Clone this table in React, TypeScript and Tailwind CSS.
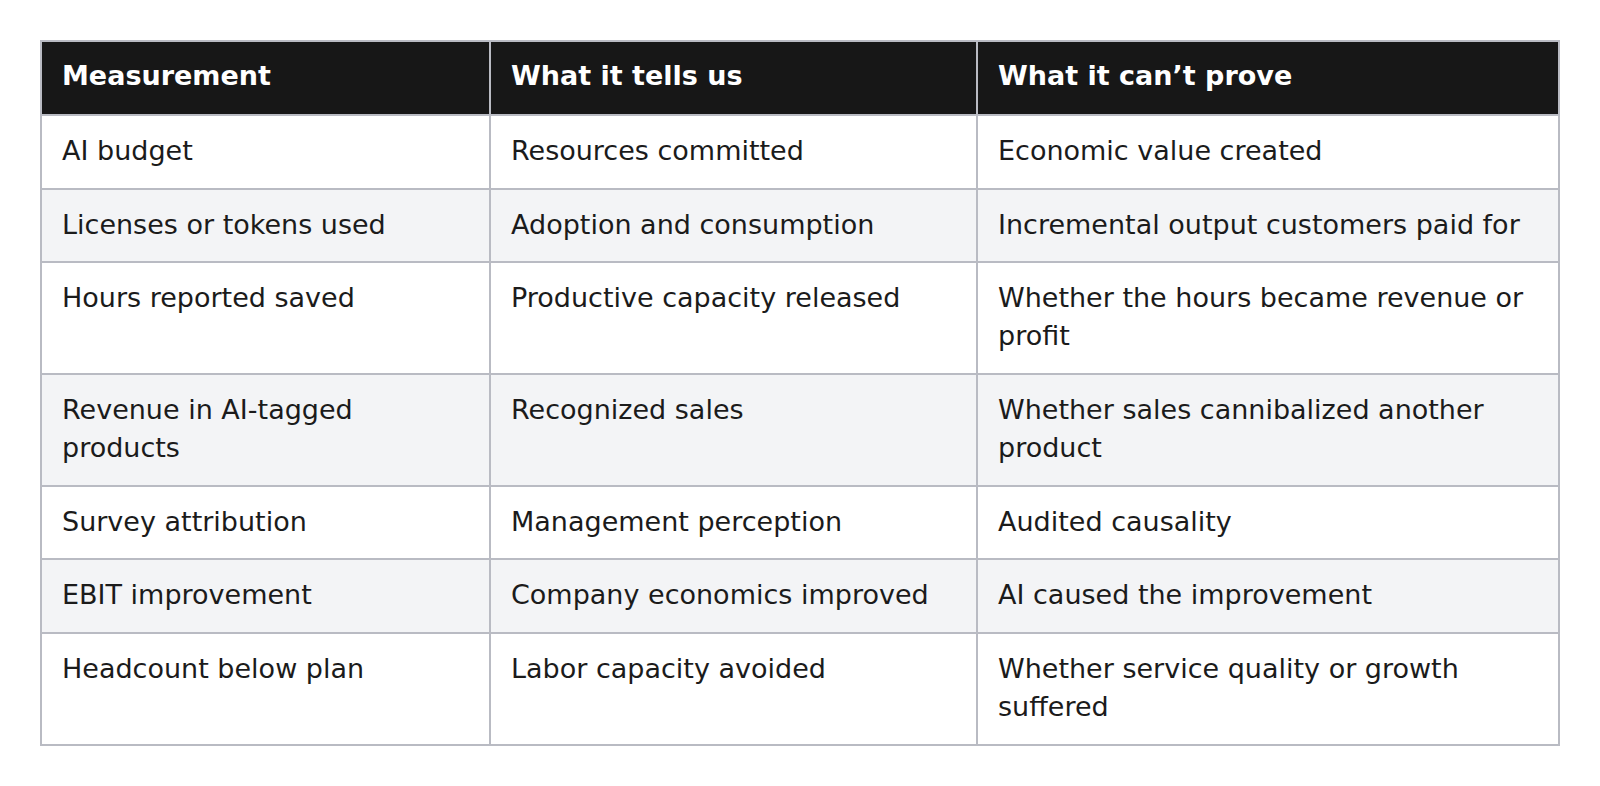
const rows: [string, string, string][] = [
  ["AI budget", "Resources committed", "Economic value created"],
  ["Licenses or tokens used", "Adoption and consumption", "Incremental output customers paid for"],
  ["Hours reported saved", "Productive capacity released", "Whether the hours became revenue or profit"],
  ["Revenue in AI-tagged products", "Recognized sales", "Whether sales cannibalized another product"],
  ["Survey attribution", "Management perception", "Audited causality"],
  ["EBIT improvement", "Company economics improved", "AI caused the improvement"],
  ["Headcount below plan", "Labor capacity avoided", "Whether service quality or growth suffered"],
];

const cell = "border-2 border-[#b9bbc3] px-[20px] align-top text-left";

export default function App() {
  return (
    <div className="min-h-[786px] bg-white p-[40px] font-['DejaVu_Sans',sans-serif] text-[27px] leading-[1.4] text-[#1b1b1b]">
      <table className="w-full table-fixed border-collapse">
        <colgroup>
          <col className="w-[449px]" />
          <col className="w-[487px]" />
          <col />
        </colgroup>
        <thead>
          <tr className="bg-[#171717] text-white">
            <th className={`${cell} pt-[15px] pb-[19px] font-bold`}>Measurement</th>
            <th className={`${cell} pt-[15px] pb-[19px] font-bold`}>What it tells us</th>
            <th className={`${cell} pt-[15px] pb-[19px] font-bold`}>What it can’t prove</th>
          </tr>
        </thead>
        <tbody>
          {rows.map((r, i) => (
            <tr key={r[0]} className={i % 2 === 1 ? "bg-[#f3f4f6]" : "bg-white"}>
              {r.map((t) => (
                <td key={t} className={`${cell} pt-[16px] pb-[18px]`}>
                  {t}
                </td>
              ))}
            </tr>
          ))}
        </tbody>
      </table>
    </div>
  );
}
